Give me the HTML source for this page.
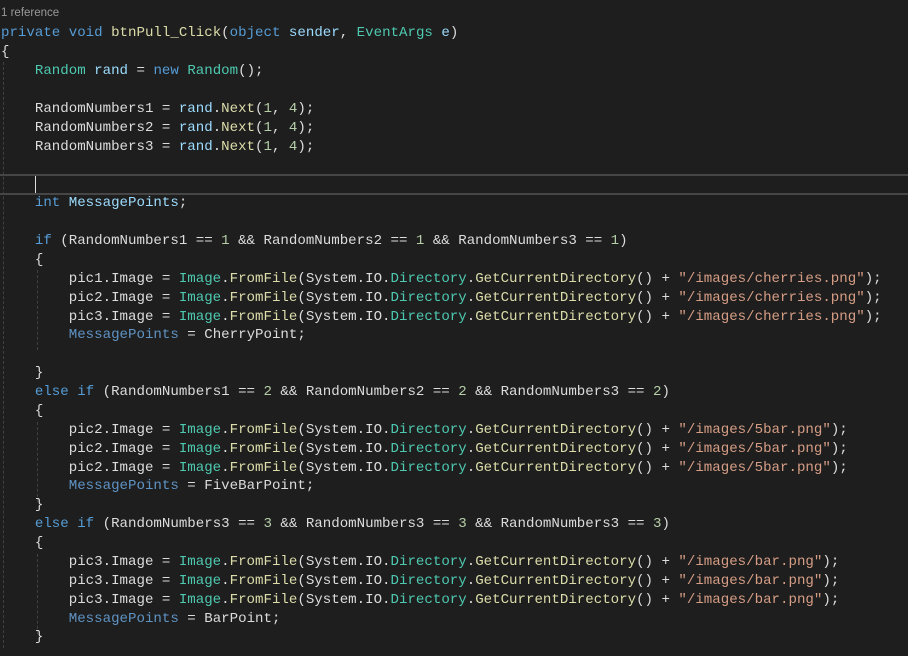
<!DOCTYPE html>
<html><head><meta charset="utf-8"><style>
html,body{margin:0;padding:0;background:#1e1e1e;width:908px;height:656px;overflow:hidden}
.ref{position:absolute;left:1px;top:7px;font:11.5px "Liberation Sans",sans-serif;color:#999}
pre{position:absolute;left:1px;top:24.4px;margin:0;font:14.12px/18.875px "Liberation Mono",monospace;color:#dcdcdc}
.k{color:#569cd6}.t{color:#4ec9b0}.m{color:#dcdcaa}.s{color:#d69d85}.n{color:#b5cea8}.v{color:#9cdcfe}.f{color:#5f93c4}
.g{position:absolute;width:0;border-left:1px dashed #404040}
.hl{position:absolute;left:0;top:174px;width:908px;height:17px;border-top:2px solid #464646;border-bottom:2px solid #464646}
.cur{position:absolute;left:35px;top:176px;width:1px;height:17px;background:#dcdcdc}
</style></head><body>
<div class="ref">1 reference</div>
<div class="hl"></div><div class="cur"></div>
<div class="g" style="left:3px;top:62px;height:586px"></div>
<div class="g" style="left:37px;top:270px;height:80px"></div>
<div class="g" style="left:37px;top:422px;height:80px"></div>
<div class="g" style="left:37px;top:554px;height:80px"></div>
<pre><span class="k">private</span> <span class="k">void</span> <span class="m">btnPull_Click</span>(<span class="k">object</span> <span class="v">sender</span>, <span class="t">EventArgs</span> <span class="v">e</span>)
{
    <span class="t">Random</span> <span class="v">rand</span> = <span class="k">new</span> <span class="t">Random</span>();

    RandomNumbers1 = <span class="v">rand</span>.<span class="m">Next</span>(<span class="n">1</span>, <span class="n">4</span>);
    RandomNumbers2 = <span class="v">rand</span>.<span class="m">Next</span>(<span class="n">1</span>, <span class="n">4</span>);
    RandomNumbers3 = <span class="v">rand</span>.<span class="m">Next</span>(<span class="n">1</span>, <span class="n">4</span>);


    <span class="k">int</span> <span class="v">MessagePoints</span>;

    <span class="k">if</span> (RandomNumbers1 == <span class="n">1</span> &amp;&amp; RandomNumbers2 == <span class="n">1</span> &amp;&amp; RandomNumbers3 == <span class="n">1</span>)
    {
        pic1.Image = <span class="t">Image</span>.<span class="m">FromFile</span>(System.IO.<span class="t">Directory</span>.<span class="m">GetCurrentDirectory</span>() + <span class="s">"/images/cherries.png"</span>);
        pic2.Image = <span class="t">Image</span>.<span class="m">FromFile</span>(System.IO.<span class="t">Directory</span>.<span class="m">GetCurrentDirectory</span>() + <span class="s">"/images/cherries.png"</span>);
        pic3.Image = <span class="t">Image</span>.<span class="m">FromFile</span>(System.IO.<span class="t">Directory</span>.<span class="m">GetCurrentDirectory</span>() + <span class="s">"/images/cherries.png"</span>);
        <span class="f">MessagePoints</span> = CherryPoint;

    }
    <span class="k">else</span> <span class="k">if</span> (RandomNumbers1 == <span class="n">2</span> &amp;&amp; RandomNumbers2 == <span class="n">2</span> &amp;&amp; RandomNumbers3 == <span class="n">2</span>)
    {
        pic2.Image = <span class="t">Image</span>.<span class="m">FromFile</span>(System.IO.<span class="t">Directory</span>.<span class="m">GetCurrentDirectory</span>() + <span class="s">"/images/5bar.png"</span>);
        pic2.Image = <span class="t">Image</span>.<span class="m">FromFile</span>(System.IO.<span class="t">Directory</span>.<span class="m">GetCurrentDirectory</span>() + <span class="s">"/images/5bar.png"</span>);
        pic2.Image = <span class="t">Image</span>.<span class="m">FromFile</span>(System.IO.<span class="t">Directory</span>.<span class="m">GetCurrentDirectory</span>() + <span class="s">"/images/5bar.png"</span>);
        <span class="f">MessagePoints</span> = FiveBarPoint;
    }
    <span class="k">else</span> <span class="k">if</span> (RandomNumbers3 == <span class="n">3</span> &amp;&amp; RandomNumbers3 == <span class="n">3</span> &amp;&amp; RandomNumbers3 == <span class="n">3</span>)
    {
        pic3.Image = <span class="t">Image</span>.<span class="m">FromFile</span>(System.IO.<span class="t">Directory</span>.<span class="m">GetCurrentDirectory</span>() + <span class="s">"/images/bar.png"</span>);
        pic3.Image = <span class="t">Image</span>.<span class="m">FromFile</span>(System.IO.<span class="t">Directory</span>.<span class="m">GetCurrentDirectory</span>() + <span class="s">"/images/bar.png"</span>);
        pic3.Image = <span class="t">Image</span>.<span class="m">FromFile</span>(System.IO.<span class="t">Directory</span>.<span class="m">GetCurrentDirectory</span>() + <span class="s">"/images/bar.png"</span>);
        <span class="f">MessagePoints</span> = BarPoint;
    }
</pre>
</body></html>
